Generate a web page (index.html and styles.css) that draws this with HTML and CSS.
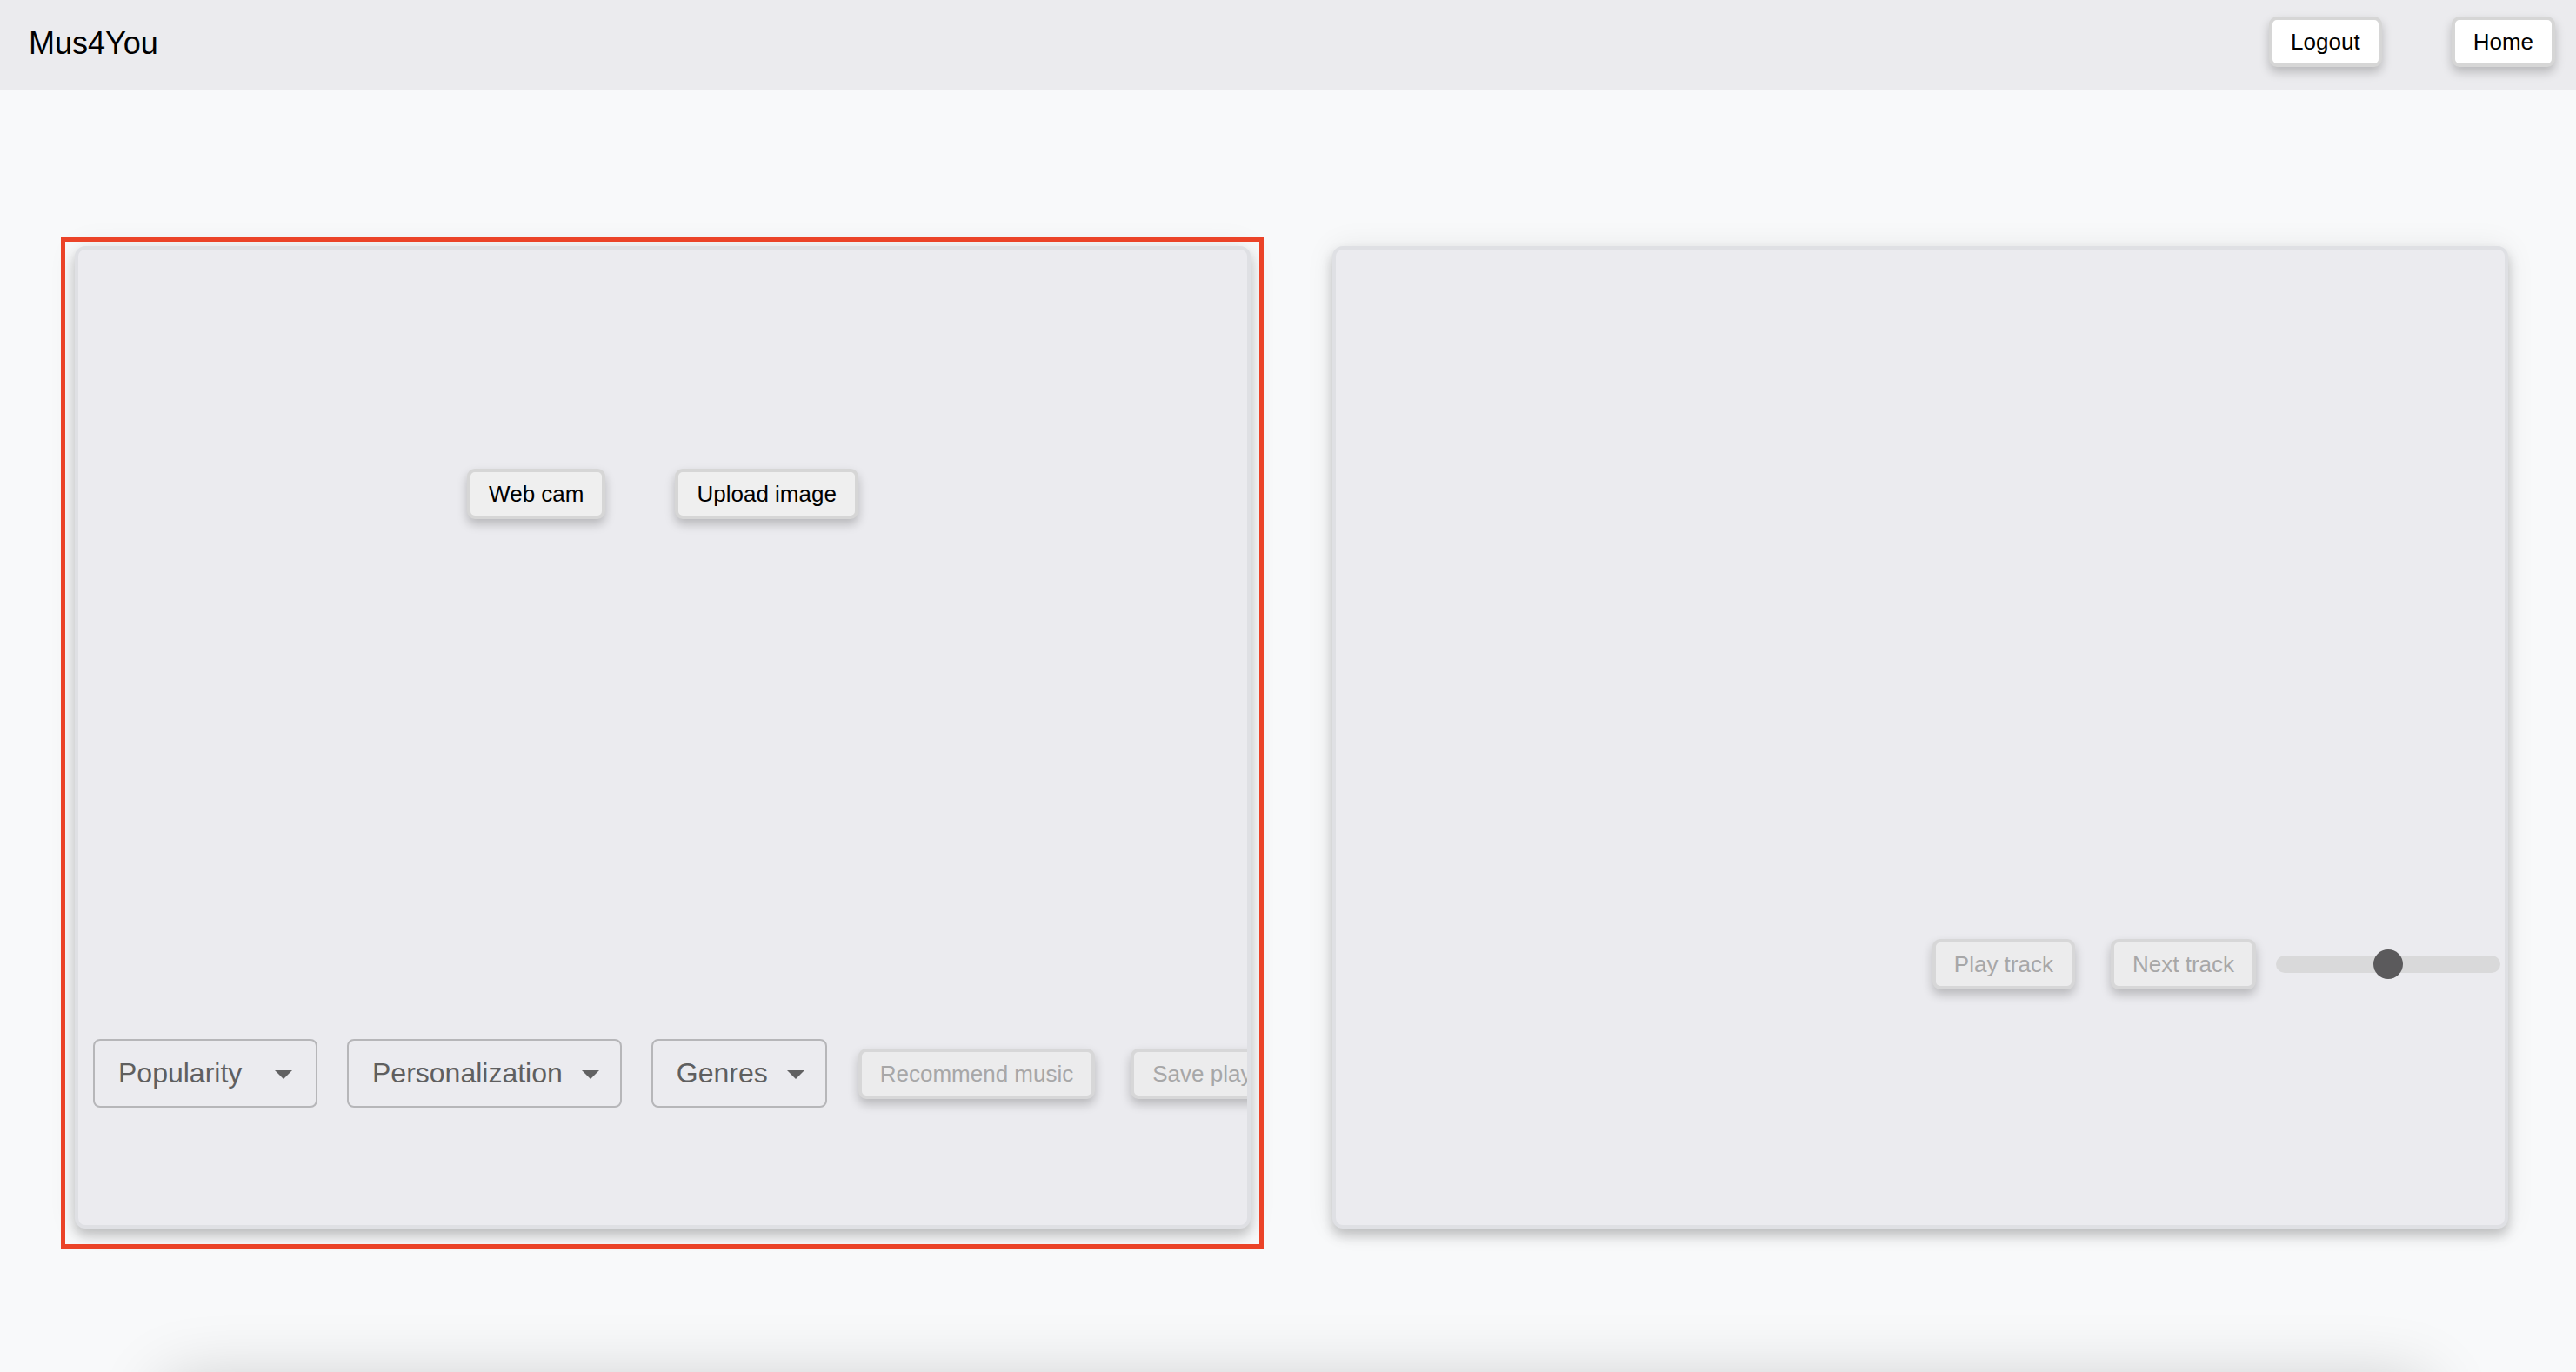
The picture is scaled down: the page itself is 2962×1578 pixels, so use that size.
FILE: index.html
```html
<!DOCTYPE html>
<html lang="en">
<head>
<meta charset="utf-8">
<title>Mus4You</title>
<link rel="stylesheet" href="styles.css">
</head>
<body>
<div class="app">
  <header class="topbar">
    <div class="brand">Mus4You</div>
    <nav class="nav">
      <button class="btn btn-light">Logout</button>
      <button class="btn btn-light">Home</button>
    </nav>
  </header>
  <main class="main">
    <div class="panels">
      <div class="panel-wrap">
        <section class="card card-left">
          <div class="upload-actions">
            <button class="btn">Web cam</button>
            <button class="btn">Upload image</button>
          </div>
          <div class="controls">
            <div class="select select-wide"><span class="select-label">Popularity</span><span class="caret"></span></div>
            <div class="select"><span class="select-label">Personalization</span><span class="caret"></span></div>
            <div class="select"><span class="select-label">Genres</span><span class="caret"></span></div>
            <button class="btn btn-disabled btn-recommend" disabled>Recommend music</button>
            <button class="btn btn-disabled btn-save" disabled>Save playlist</button>
          </div>
        </section>
        <div class="highlight"></div>
      </div>
      <section class="card card-right">
        <div class="player">
          <button class="btn btn-disabled" disabled>Play track</button>
          <button class="btn btn-disabled btn-next" disabled>Next track</button>
          <div class="slider">
            <div class="track"><span class="thumb"></span></div>
          </div>
        </div>
      </section>
    </div>
    <section class="below"></section>
  </main>
</div>
</body>
</html>
```

FILE: styles.css
```css
* { box-sizing: border-box; }

html, body {
  margin: 0;
  padding: 0;
}

body {
  background: #f8f9fa;
  font-family: "Liberation Sans", Arial, sans-serif;
  color: #000;
}

.app {
  height: 100vh;
  overflow: hidden;
  display: flex;
  flex-direction: column;
}

.topbar {
  height: 104px;
  flex-shrink: 0;
  background: #ebebee;
  display: flex;
  align-items: center;
  justify-content: space-between;
  padding: 0 24px 8px 33px;
}

.brand {
  font-size: 36px;
  margin-top: 4px;
  color: #000;
}

.nav {
  display: flex;
  gap: 80px;
}

.btn {
  font-family: "Liberation Sans", Arial, sans-serif;
  font-size: 26px;
  line-height: 30px;
  padding: 10px 21px;
  border: 4px solid #d6d6d6;
  border-radius: 9px;
  background: #efefef;
  color: #000;
  white-space: nowrap;
  flex-shrink: 0;
  box-shadow: 0 6px 12px rgba(0, 0, 0, 0.22);
  cursor: pointer;
}

.btn-light {
  background: #ffffff;
}

.btn-disabled {
  background: #ececed;
  border-color: #d7d7d8;
  color: #a7a7a8;
  cursor: default;
}

.main {
  flex: 1;
  padding-top: 179px;
}

.panels {
  display: flex;
  padding-left: 86px;
  gap: 94px;
}

.panel-wrap {
  position: relative;
}

.highlight {
  position: absolute;
  top: -10px;
  left: -16px;
  right: -15px;
  bottom: -23px;
  border: 5px solid #eb4328;
  pointer-events: none;
}

.card {
  width: 1352px;
  height: 1130px;
  background: #ebebef;
  border: 4px solid #dfe0e4;
  border-radius: 12px;
  box-shadow: 0 8px 14px rgba(0, 0, 0, 0.22), 0 0 34px rgba(0, 0, 0, 0.07);
  overflow: hidden;
}

.upload-actions {
  display: flex;
  justify-content: center;
  gap: 80px;
  margin-top: 252px;
}

.controls {
  display: flex;
  align-items: center;
  margin-top: 598px;
  padding-left: 17px;
}

.select {
  display: flex;
  align-items: center;
  flex-shrink: 0;
  height: 79px;
  padding: 0 24px 0 27px;
  border: 2px solid #b6b6b9;
  border-radius: 8px;
  font-size: 32px;
  color: #5f5f60;
  white-space: nowrap;
  margin-right: 34px;
  gap: 22px;
}

.select-wide {
  min-width: 258px;
  padding-right: 27px;
  justify-content: space-between;
}

.caret {
  width: 0;
  height: 0;
  border-left: 10px solid transparent;
  border-right: 10px solid transparent;
  border-top: 10px solid #616162;
  margin-top: 3px;
}

.btn-recommend {
  margin-left: 2px;
}

.btn-save {
  margin-left: 41px;
}

.player {
  display: flex;
  justify-content: flex-end;
  align-items: center;
  margin-top: 793px;
  padding-right: 5px;
}

.btn-next {
  margin-left: 41px;
}

.slider {
  width: 258px;
  height: 34px;
  margin-left: 23px;
  display: flex;
  align-items: center;
}

.track {
  position: relative;
  width: 100%;
  height: 20px;
  border-radius: 10px;
  background: #d9d9da;
}

.thumb {
  position: absolute;
  left: 50%;
  top: 50%;
  width: 34px;
  height: 34px;
  border-radius: 50%;
  background: #5b5a5c;
  transform: translate(-50%, -50%);
}

.below {
  margin: 177px 0 0 190px;
  width: 2600px;
  height: 400px;
  background: #f8f9fa;
  border-radius: 12px;
  box-shadow: 0 0 80px rgba(0, 0, 0, 0.2);
}
```
